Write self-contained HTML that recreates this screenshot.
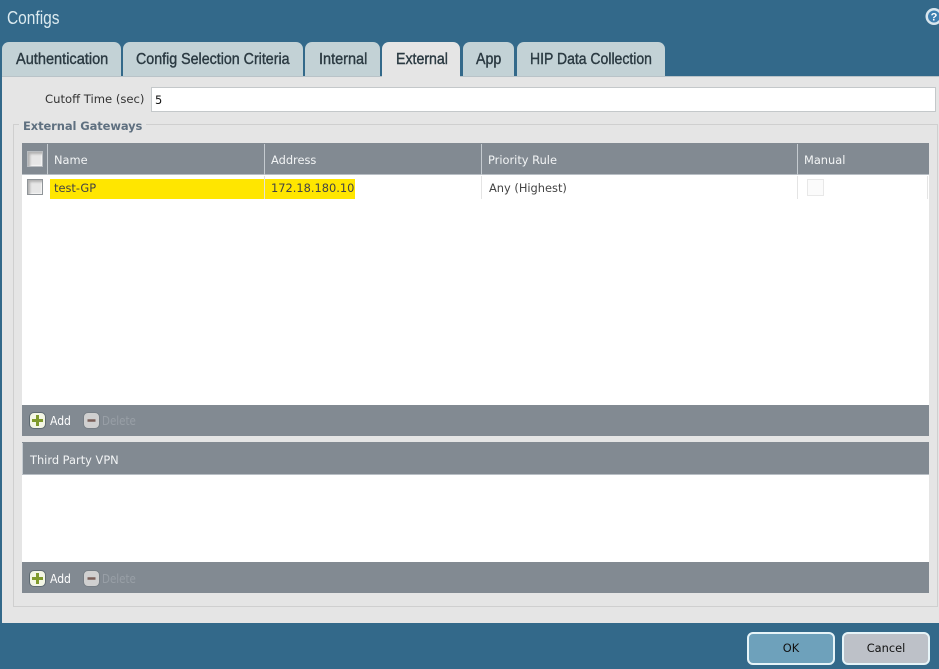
<!DOCTYPE html>
<html><head><meta charset="utf-8"><style>
html,body{margin:0;padding:0}
body{width:939px;height:669px;overflow:hidden;background:#33698a;position:relative;font-family:"DejaVu Sans",sans-serif;font-size:11.4px;color:#333}
div,span.a{position:absolute;box-sizing:border-box;white-space:nowrap}
.tab{top:42px;height:34px;background:#c3d2d6;border-radius:7px 7px 0 0}
.tt{position:absolute;top:8px;font:16px/20px "Liberation Sans",sans-serif;color:#2b3a42;transform:scaleX(.89);transform-origin:0 0;-webkit-text-stroke:.4px #2b3a42}
.hd{color:#f2f4f5;line-height:14px;height:14px}
.sep{width:1px;background:#c5cbd0}
.bar{background:#828a92;left:22px;width:907px}
.cb{width:16px;height:16px;border:1px solid #8f9498;background:#e6e6e6;box-shadow:inset 2px 2px 2px #b0b0b0,inset -1px -1px 1px #f4f4f4}
.ic{width:17px;height:17px;border-radius:5px}
</style></head><body>
<div style="left:7px;top:8px;font:18px/20px 'Liberation Sans',sans-serif;color:#dcebf0;transform:scaleX(.86);transform-origin:0 0">Configs</div>
<svg style="position:absolute;left:924px;top:7px" width="15" height="19"><circle cx="10" cy="9.5" r="8.5" fill="#d8e6ee"/><circle cx="10" cy="9.5" r="6" fill="#3f7fb0"/><text x="10" y="13.5" font-family="Liberation Sans" font-weight="700" font-size="11" fill="#fff" text-anchor="middle">?</text></svg>

<div style="left:2px;top:76px;width:937px;height:547px;background:#e5e5e5;border-top:1px solid #b9c3c8"></div>

<div class="tab" style="left:2px;width:119px"><span class="tt" style="left:14px;transform:scaleX(.91)">Authentication</span></div>
<div class="tab" style="left:123px;width:180px"><span class="tt" style="left:13px">Config Selection Criteria</span></div>
<div class="tab" style="left:305px;width:75px"><span class="tt" style="left:14px;transform:scaleX(.905)">Internal</span></div>
<div class="tab" style="left:382px;width:78px;height:35px;background:#e5e5e5"><span class="tt" style="left:14px;transform:scaleX(.885)">External</span></div>
<div class="tab" style="left:463px;width:51px"><span class="tt" style="left:13px">App</span></div>
<div class="tab" style="left:517px;width:148px"><span class="tt" style="left:13px;transform:scaleX(.875)">HIP Data Collection</span></div>

<div style="left:45px;top:92px;line-height:14px;font-size:11.6px">Cutoff Time (sec)</div>
<div style="left:151px;top:87px;width:785px;height:25px;background:#fff;border:1px solid #c4c8ca;padding-left:3px;line-height:24px;color:#111">5</div>

<div style="left:13px;top:124px;width:925px;height:483px;border:1px solid #cfcfcf"></div>
<div style="left:19px;top:119px;padding:0 4px;background:#e5e5e5;font-weight:700;color:#5f7080;line-height:15px;height:15px;font-size:11.5px;letter-spacing:-.1px">External Gateways</div>

<div style="left:22px;top:175px;width:907px;height:230px;background:#fff"></div>
<div class="bar" style="top:143px;height:32px;border-bottom:1px solid #b8bec4"></div>
<div class="sep" style="left:47px;top:144px;height:31px"></div>
<div class="sep" style="left:264px;top:144px;height:31px"></div>
<div class="sep" style="left:481px;top:144px;height:31px"></div>
<div class="sep" style="left:797px;top:144px;height:31px"></div>
<div class="cb" style="left:27px;top:151px;border-color:#b8bcc0"></div>
<div class="hd" style="left:54px;top:153px">Name</div>
<div class="hd" style="left:271px;top:153px">Address</div>
<div class="hd" style="left:488px;top:153px">Priority Rule</div>
<div class="hd" style="left:804px;top:153px">Manual</div>

<div style="left:50px;top:179px;width:305px;height:20px;background:#ffe600"></div>
<div class="cb" style="left:27px;top:179px"></div>
<div class="sep" style="left:264px;top:176px;height:23px;background:#e4e4d8"></div>
<div class="sep" style="left:481px;top:176px;height:23px;background:#e4e4e4"></div>
<div class="sep" style="left:797px;top:176px;height:23px;background:#e4e4e4"></div>
<div class="sep" style="left:927px;top:176px;height:23px;background:#e4e4e4"></div>
<div style="left:54px;top:181px;line-height:14px;color:#444">test-GP</div>
<div style="left:271px;top:181px;line-height:14px;color:#444">172.18.180.10</div>
<div style="left:489px;top:181px;line-height:14px;color:#444">Any (Highest)</div>
<div style="left:807px;top:179px;width:17px;height:17px;border:1px solid #e8e8e8;background:#fbfbfb"></div>

<div class="bar" style="top:405px;height:31px"></div>
<div class="ic" style="left:29px;top:412px;background:#f3f6e4;border:1px solid #5e6a72"></div>
<svg style="position:absolute;left:29px;top:412px" width="17" height="17"><path d="M8.5 3v11M3 8.5h11" stroke="#7f9a2c" stroke-width="3"/></svg>
<div class="hd" style="left:50px;top:414px;color:#fff;transform:scaleX(.9);transform-origin:0 0;font-size:12px">Add</div>
<div class="ic" style="left:83px;top:412px;background:#d0d0d0;border:1px solid #777f86"></div>
<svg style="position:absolute;left:83px;top:412px" width="17" height="17"><path d="M4.5 8.5h8" stroke="#7a5f58" stroke-width="2.5"/></svg>
<div class="hd" style="left:102px;top:414px;color:#989fa6;transform:scaleX(.86);transform-origin:0 0;font-size:12px">Delete</div>

<div class="bar" style="top:442px;height:33px;border-bottom:1px solid #b8bec4"></div>
<div class="sep" style="left:22px;top:443px;height:31px"></div>
<div class="hd" style="left:30px;top:453px">Third Party VPN</div>
<div style="left:22px;top:475px;width:907px;height:87px;background:#fff"></div>
<div class="bar" style="top:562px;height:31px"></div>
<div class="ic" style="left:29px;top:570px;background:#f3f6e4;border:1px solid #5e6a72"></div>
<svg style="position:absolute;left:29px;top:570px" width="17" height="17"><path d="M8.5 3v11M3 8.5h11" stroke="#7f9a2c" stroke-width="3"/></svg>
<div class="hd" style="left:50px;top:572px;color:#fff;transform:scaleX(.9);transform-origin:0 0;font-size:12px">Add</div>
<div class="ic" style="left:83px;top:570px;background:#d0d0d0;border:1px solid #777f86"></div>
<svg style="position:absolute;left:83px;top:570px" width="17" height="17"><path d="M4.5 8.5h8" stroke="#7a5f58" stroke-width="2.5"/></svg>
<div class="hd" style="left:102px;top:572px;color:#989fa6;transform:scaleX(.86);transform-origin:0 0;font-size:12px">Delete</div>

<div style="left:747px;top:632px;width:88px;height:33px;background:#6ea1bb;border:2px solid #e6f4f8;border-radius:6px;text-align:center;line-height:28px;color:#111">OK</div>
<div style="left:842px;top:632px;width:88px;height:33px;background:#bdc1c8;border:2px solid #e6f4f8;border-radius:6px;text-align:center;line-height:28px;color:#111">Cancel</div>
</body></html>
